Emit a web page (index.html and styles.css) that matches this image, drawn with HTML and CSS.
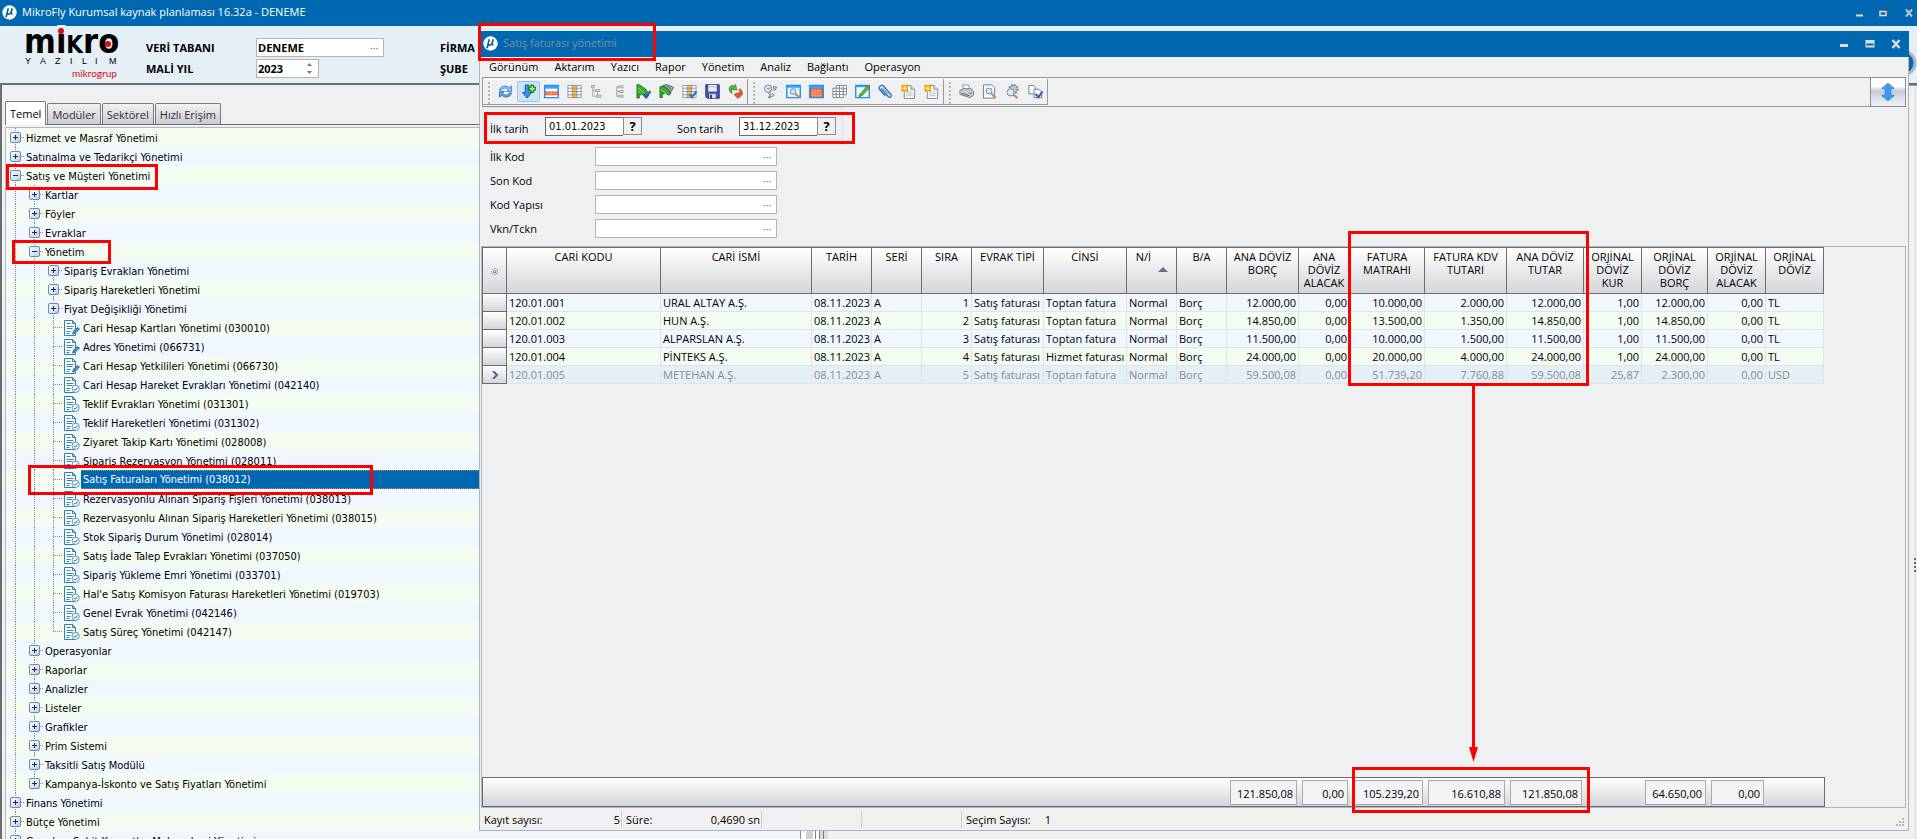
FILE: index.html
```
<!DOCTYPE html>
<html lang="tr">
<head>
    <meta charset="UTF-8">
    <meta name="viewport" content="width=device-width, initial-scale=1.0">
    <title>MikroFly Kurumsal kaynak planlaması</title>
    <link rel="stylesheet" href="styles.css">
</head>
<body>
    <svg class="defs" aria-hidden="true">
        <symbol id="mu" viewBox="0 0 15 15">
            <circle cx="7.5" cy="7.5" r="7.2" fill="#fff"/>
            <path d="M6.3 3.2 L4 12.2 M5.3 7.6 Q5.2 9.4 6.8 9.2 Q8.6 8.8 9.4 6.5 L10.2 3.2 M9.4 6.5 Q8.8 9.2 10.6 8.8" fill="none" stroke="#0a5ea8" stroke-width="1.6"/>
        </symbol>
        <symbol id="doc-clip" viewBox="0 0 16 16">
            <path d="M.5.5h8l3 3v12h-11z" fill="#fff" stroke="#2b7fb3"/>
            <path d="M8.5.5v3h3" fill="none" stroke="#2b7fb3"/>
            <path d="M2.5 3.5h4M2.5 6.5h7M2.5 8.5h6M2.5 11.5h4M2.5 13.5h3" stroke="#3d86b3"/>
            <path d="M8 14.5l1-3.500 4.500-4 2.500 2-4.500 5z" fill="#2678ab"/>
            <path d="M10 12.500l4-4M11 13.500l4-3.500" stroke="#9fd0ec" stroke-width=".7"/>
        </symbol>
        <symbol id="doc-check" viewBox="0 0 16 16">
            <path d="M.5.5h8l3 3v12h-11z" fill="#fff" stroke="#2b7fb3"/>
            <path d="M8.5.5v3h3" fill="none" stroke="#2b7fb3"/>
            <path d="M2.5 3.5h4M2.5 6.5h7M2.5 8.5h6M2.5 11.5h4M2.5 13.5h3" stroke="#3d86b3"/>
            <circle cx="11.7" cy="11.8" r="3.6" fill="#fff" stroke="#4b9acb"/>
            <path d="M10 11.8l1.300 1.400 2.300-2.700" fill="none" stroke="#17608f"/>
        </symbol>
        <symbol id="page-new" viewBox="0 0 16 16">
            <path d="M3.5 1.5h7l4 4v10h-11z" fill="#f6f8fc" stroke="#7d8899"/>
            <path d="M10.5 1.5v4h4" fill="#dfe5ee" stroke="#7d8899"/>
            <path d="M5.5 8.5h7M5.5 10.5h7M5.5 12.5h7" stroke="#b9c4d6"/>
            <path d="M.5 1h7v7h-7z" fill="#f7a21b"/>
            <circle cx="4" cy="4.5" r="2" fill="#ffef5e"/>
            <path d="M1 1.5l1 1M7 1.5l-1 1M1 7.5l1-1M7 7.5l-1-1" stroke="#e4572e"/>
        </symbol>
    </svg>

    <header class="titlebar">
        <svg class="logo-mu"><use href="#mu"/></svg>
        <span class="title-text">MikroFly Kurumsal kaynak planlaması 16.32a - DENEME</span>
        <div class="win-buttons">
            <button aria-label="Küçült"><svg viewBox="0 0 10 10"><path d="M2 6h7" stroke="#555"/><path d="M2 7.5h7" stroke="#dcdcdc" stroke-width="2"/></svg></button>
            <button aria-label="Geri yükle"><svg viewBox="0 0 10 10"><path d="M3 2.5V1h6v5H8" fill="none" stroke="#555"/><path d="M1 3.5h6v4H1z" fill="none" stroke="#dcdcdc" stroke-width="1.5"/></svg></button>
            <button aria-label="Kapat"><svg viewBox="0 0 10 10"><path d="M2 1.5l6 7M8 1.5l-6 7" stroke="#c4c4c8" stroke-width="2"/></svg></button>
        </div>
    </header>

    <section class="company">
        <svg class="brand" viewBox="0 0 100 52" role="img" aria-label="mikro yazılım">
            <text x="0" y="23" class="brand-name">mi<tspan class="small-cap">k</tspan>ro</text>
            <rect x="33" y="-5" width="9" height="8" fill="#e4eff6"/>
            <circle cx="37" cy="1" r="3" fill="#e30613"/>
            <circle cx="84" cy="14" r="3" fill="#e30613"/>
            <text x="1 16 31 46 58 71 85" y="34" class="brand-sub">YAZILIM</text>
            <text x="48" y="47" class="brand-group">mikrogrup</text>
        </svg>
        <div class="company-fields">
            <label for="db">VERİ TABANI</label>
            <div class="field db-field"><input id="db" type="text" value="DENEME"><button aria-label="Seç">···</button></div>
            <label for="year">MALİ YIL</label>
            <div class="field year-field"><input id="year" type="text" value="2023"><svg viewBox="0 0 5 11"><path d="M0 3l2.500-3L5 3zM0 8l2.500 3L5 8z" fill="#777"/></svg></div>
        </div>
        <div class="company-names">
            <span>FİRMA</span>
            <span>ŞUBE</span>
        </div>
        <svg class="round-badge" viewBox="0 0 28 28"><circle cx="14" cy="14" r="12" fill="#0067b1" stroke="#b4b4b8" stroke-width="3"/></svg>
    </section>

    <main class="workspace">
        <aside class="sidebar">
            <nav class="tabs">
                <button class="tab active">Temel</button>
                <button class="tab">Modüler</button>
                <button class="tab">Sektörel</button>
                <button class="tab">Hızlı Erişim</button>
            </nav>
            <ul class="tree">
                <li><i class="g node"><button class="toggle"></button></i><span>Hizmet ve Masraf Yönetimi</span></li>
                <li><i class="g node"><button class="toggle"></button></i><span>Satınalma ve Tedarikçi Yönetimi</span></li>
                <li><i class="g node"><button class="toggle open"></button></i><span>Satış ve Müşteri Yönetimi</span></li>
                <li><i class="g"></i><i class="g node"><button class="toggle"></button></i><span>Kartlar</span></li>
                <li><i class="g"></i><i class="g node"><button class="toggle"></button></i><span>Föyler</span></li>
                <li><i class="g"></i><i class="g node"><button class="toggle"></button></i><span>Evraklar</span></li>
                <li><i class="g"></i><i class="g node"><button class="toggle open"></button></i><span>Yönetim</span></li>
                <li><i class="g"></i><i class="g"></i><i class="g node"><button class="toggle"></button></i><span>Sipariş Evrakları Yönetimi</span></li>
                <li><i class="g"></i><i class="g"></i><i class="g node"><button class="toggle"></button></i><span>Sipariş Hareketleri Yönetimi</span></li>
                <li><i class="g"></i><i class="g"></i><i class="g node"><button class="toggle"></button></i><span>Fiyat Değişikliği Yönetimi</span></li>
                <li><i class="g"></i><i class="g"></i><i class="g tee"></i><svg><use href="#doc-clip"/></svg><span>Cari Hesap Kartları Yönetimi (030010)</span></li>
                <li><i class="g"></i><i class="g"></i><i class="g tee"></i><svg><use href="#doc-clip"/></svg><span>Adres Yönetimi (066731)</span></li>
                <li><i class="g"></i><i class="g"></i><i class="g tee"></i><svg><use href="#doc-clip"/></svg><span>Cari Hesap Yetkilileri Yönetimi (066730)</span></li>
                <li><i class="g"></i><i class="g"></i><i class="g tee"></i><svg><use href="#doc-check"/></svg><span>Cari Hesap Hareket Evrakları Yönetimi (042140)</span></li>
                <li><i class="g"></i><i class="g"></i><i class="g tee"></i><svg><use href="#doc-check"/></svg><span>Teklif Evrakları Yönetimi (031301)</span></li>
                <li><i class="g"></i><i class="g"></i><i class="g tee"></i><svg><use href="#doc-check"/></svg><span>Teklif Hareketleri Yönetimi (031302)</span></li>
                <li><i class="g"></i><i class="g"></i><i class="g tee"></i><svg><use href="#doc-check"/></svg><span>Ziyaret Takip Kartı Yönetimi (028008)</span></li>
                <li><i class="g"></i><i class="g"></i><i class="g tee"></i><svg><use href="#doc-check"/></svg><span>Sipariş Rezervasyon Yönetimi (028011)</span></li>
                <li class="selected"><i class="g"></i><i class="g"></i><i class="g tee"></i><svg><use href="#doc-check"/></svg><span>Satış Faturaları Yönetimi (038012)</span></li>
                <li><i class="g"></i><i class="g"></i><i class="g tee"></i><svg><use href="#doc-check"/></svg><span>Rezervasyonlu Alınan Sipariş Fişleri Yönetimi (038013)</span></li>
                <li><i class="g"></i><i class="g"></i><i class="g tee"></i><svg><use href="#doc-check"/></svg><span>Rezervasyonlu Alınan Sipariş Hareketleri Yönetimi (038015)</span></li>
                <li><i class="g"></i><i class="g"></i><i class="g tee"></i><svg><use href="#doc-check"/></svg><span>Stok Sipariş Durum Yönetimi (028014)</span></li>
                <li><i class="g"></i><i class="g"></i><i class="g tee"></i><svg><use href="#doc-check"/></svg><span>Satış İade Talep Evrakları Yönetimi (037050)</span></li>
                <li><i class="g"></i><i class="g"></i><i class="g tee"></i><svg><use href="#doc-check"/></svg><span>Sipariş Yükleme Emri Yönetimi (033701)</span></li>
                <li><i class="g"></i><i class="g"></i><i class="g tee"></i><svg><use href="#doc-check"/></svg><span>Hal'e Satış Komisyon Faturası Hareketleri Yönetimi (019703)</span></li>
                <li><i class="g"></i><i class="g"></i><i class="g tee"></i><svg><use href="#doc-check"/></svg><span>Genel Evrak Yönetimi (042146)</span></li>
                <li><i class="g"></i><i class="g"></i><i class="g tee last"></i><svg><use href="#doc-check"/></svg><span>Satış Süreç Yönetimi (042147)</span></li>
                <li><i class="g"></i><i class="g node"><button class="toggle"></button></i><span>Operasyonlar</span></li>
                <li><i class="g"></i><i class="g node"><button class="toggle"></button></i><span>Raporlar</span></li>
                <li><i class="g"></i><i class="g node"><button class="toggle"></button></i><span>Analizler</span></li>
                <li><i class="g"></i><i class="g node"><button class="toggle"></button></i><span>Listeler</span></li>
                <li><i class="g"></i><i class="g node"><button class="toggle"></button></i><span>Grafikler</span></li>
                <li><i class="g"></i><i class="g node"><button class="toggle"></button></i><span>Prim Sistemi</span></li>
                <li><i class="g"></i><i class="g node"><button class="toggle"></button></i><span>Taksitli Satış Modülü</span></li>
                <li><i class="g"></i><i class="g node last"><button class="toggle"></button></i><span>Kampanya-İskonto ve Satış Fiyatları Yönetimi</span></li>
                <li><i class="g node"><button class="toggle"></button></i><span>Finans Yönetimi</span></li>
                <li><i class="g node"><button class="toggle"></button></i><span>Bütçe Yönetimi</span></li>
                <li><i class="g node"><button class="toggle"></button></i><span>Genel ve Sabit Kıymetler Muhasebesi Yönetimi</span></li>
            </ul>
        </aside>
        <div class="splitter"></div>
        <div class="desktop"></div>
        <div class="right-rail"><svg viewBox="0 0 3 16"><path d="M0 0h2v2H0zM0 4h2v2H0zM0 8h2v2H0zM0 12h2v2H0z" fill="#666"/></svg></div>
    </main>

    <section class="window">
        <header class="titlebar window-title">
            <svg class="logo-mu"><use href="#mu"/></svg>
            <span class="title-text">Satış faturası yönetimi</span>
            <div class="win-buttons">
                <button aria-label="Küçült"><svg viewBox="0 0 10 10"><path d="M1 6.5h8" stroke="#dcdcdc" stroke-width="3"/></svg></button>
                <button aria-label="Büyüt"><svg viewBox="0 0 10 10"><path d="M.5 1h9v7.500h-9z" fill="#dcdcdc"/><path d="M1.500 4.500h7v2h-7z" fill="#0067b1"/></svg></button>
                <button aria-label="Kapat"><svg viewBox="0 0 10 10"><path d="M1.500 1l7 8M8.500 1l-7 8" stroke="#dcdcdc" stroke-width="2.500"/></svg></button>
            </div>
        </header>
        <nav class="menu">
            <a href="#">Görünüm</a>
            <a href="#">Aktarım</a>
            <a href="#">Yazıcı</a>
            <a href="#">Rapor</a>
            <a href="#">Yönetim</a>
            <a href="#">Analiz</a>
            <a href="#">Bağlantı</a>
            <a href="#">Operasyon</a>
        </nav>
        <div class="toolbar">
            <div class="tools">
                <button aria-label="Yenile"><svg viewBox="0 0 16 16"><path d="M1.500 6.500C2.500 2 8.500.5 12 4l2.500-2v6H9l2-2C8.500 3.500 5 4 4 6.500z" fill="#8cc6f5" stroke="#2f6fbe" stroke-width=".8"/><path d="M14.500 9.500C13.500 14 7.500 15.500 4 12l-2.500 2V8H7l-2 2c2.500 2.500 6 2 7-.5z" fill="#5fa4e6" stroke="#2f5fa8" stroke-width=".8"/></svg></button>
                <button class="pressed" aria-label="Ekle"><svg viewBox="0 0 16 16"><path d="M4.500 1h4v8h3L6.500 15 1.500 9h3z" fill="#3f90e0" stroke="#1d5aa8"/><path d="M10.500 1h3v2.500H16v3h-2.500V9h-3V6.500H8v-3h2.500z" fill="#3fc028" stroke="#157a10"/><path d="M12 2.500v5M9.500 5h5" stroke="#d8ffd0"/></svg></button>
                <button aria-label="Satır"><svg viewBox="0 0 16 16"><path d="M.8 1.500h14.400v13H.8z" fill="#fff" stroke="#1c8ff0" stroke-width="1.500"/><path d="M1 2h14v3H1z" fill="#36a3ff"/><path d="M1 8h14v4H1z" fill="#f0582a"/><path d="M4.500 8v4M8 8v4M11.500 8v4M1 10h14" stroke="#ffb090" stroke-width=".7"/></svg></button>
                <button aria-label="Sütun"><svg viewBox="0 0 16 16"><path d="M1 1.500h14v13H1z" fill="#fff"/><path d="M5.500 1.500h5v13h-5z" fill="#ffb733"/><path d="M1 1.500h14v13H1zM5.500 1.500v13M10.500 1.500v13M1 4.500h14M1 8h14M1 11.500h14" fill="none" stroke="#848a9e" stroke-width=".9"/></svg></button>
                <button aria-label="Ağaç"><svg viewBox="0 0 16 16"><path d="M1.500 1.500h3v2h-3zM6 6h4v2H6zM7.500 12h4v2h-4zM3 4v9h4M3 7h3M8 8v4" fill="none" stroke="#aaa" stroke-width="1.200"/></svg></button>
                <button aria-label="Daralt"><svg viewBox="0 0 16 16"><path d="M6.500 2h4v2h-4zM6.500 7h4v2h-4zM6.500 12h4v2h-4zM6 3H4v10h2M4 8h2" fill="none" stroke="#aaa" stroke-width="1.200"/></svg></button>
                <button aria-label="Seç"><svg viewBox="0 0 16 16"><path d="M1 .5l3 .5 7 5 2.500 6-2 3-6-5-.5 2-1.500-2v5H1z" fill="#35b028" stroke="#145f10" stroke-width=".8"/><path d="M2 4l6 5M2 8l3 2" stroke="#7fe070"/><path d="M8 11l2.500 3L15.500 7.500" fill="none" stroke="#2b5fc0" stroke-width="2.500"/></svg></button>
                <button aria-label="Seçimi kaldır"><svg viewBox="0 0 16 16"><path d="M4 1.500l4-1 7.500 3L12 10 7 5z" fill="#a8a8c4" stroke="#4a4a6a" stroke-width=".8"/><path d="M8 1.500l5 4M6 2l6 6" stroke="#5c5c80" stroke-width=".7"/><path d="M1 3l4-.5 6 4 1.500 4-2 1.500-5-3-.5 2-1.500-1.500v5H1z" fill="#35b028" stroke="#145f10" stroke-width=".8"/><path d="M2 6l6 4" stroke="#7fe070"/></svg></button>
                <button aria-label="Sütun seç"><svg viewBox="0 0 16 16"><path d="M1 1.500h14v13H1z" fill="#fff"/><path d="M5.500 1.500h5v13h-5z" fill="#ffb733"/><path d="M1 1.500h14v13H1zM5.500 1.500v13M10.500 1.500v13M1 4.500h14M1 8h14M1 11.500h14" fill="none" stroke="#848a9e" stroke-width=".9"/><path d="M8 11l2.500 3L15.500 8" fill="none" stroke="#2b70d0" stroke-width="2.200"/></svg></button>
                <button aria-label="Kaydet"><svg viewBox="0 0 16 16"><path d="M.8.8h14.400v14.400H2.500L.8 13.500z" fill="#4a55a8" stroke="#2c3478"/><path d="M3.500 1h9v7h-9z" fill="#eef0f8"/><path d="M3.500 3h9" stroke="#b0b6d8"/><path d="M4.500 10.500h7V15h-7z" fill="#d8dcee"/><path d="M5.500 11.500h2V15h-2z" fill="#2c3478"/></svg></button>
                <button aria-label="Dönüştür"><svg viewBox="0 0 16 16"><path d="M3.500 10C-1 5 2 .5 6.500 2L8 .5l1.500 6-6-.5 1.500-1.500C3 4.500 3 7 4.500 9z" fill="#58b838" stroke="#2c7a1a" stroke-width=".7"/><path d="M12.500 5c4 3 4 8-1 9l-1 1.500L6.500 11l6-2-1 2.500c2.500-.5 2-3.500 0-5z" fill="#f0562c" stroke="#a82c10" stroke-width=".7"/></svg></button>
            </div>
            <div class="tools">
                <button aria-label="Süz"><svg viewBox="0 0 16 16"><circle cx="5.500" cy="5" r="4" fill="#dbe8f2" stroke="#7b8796"/><path d="M4 4l1.500 1.500L8 4M11 2.500l4 1-3 4zM9 6l-3 4 3 4 3-2-2-2" fill="#c5ccd6" stroke="#7b8796"/><circle cx="7" cy="14" r="1.500" fill="#8a93a0"/></svg></button>
                <button aria-label="Bul"><svg viewBox="0 0 16 16"><path d="M.8 1.500h14.400v13H.8z" fill="#eaf5ff" stroke="#1c8ff0" stroke-width="1.500"/><path d="M1 2h14v2H1z" fill="#36a3ff"/><circle cx="7.500" cy="8" r="3" fill="#cfe8fa" stroke="#5a86b0"/><path d="M10 10.500l4 4" stroke="#d8843a" stroke-width="2.200"/></svg></button>
                <button aria-label="Tablo"><svg viewBox="0 0 16 16"><path d="M.8 1.500h14.400v13H.8z" fill="#f0582a" stroke="#1c8ff0" stroke-width="1.500"/><path d="M1 2h14v2.500H1z" fill="#36a3ff"/><path d="M4 5v9M6.500 5v9M9 5v9M11.500 5v9M2 7.500h12M2 10h12M2 12.500h12" stroke="#ffb898" stroke-width=".7"/></svg></button>
                <button aria-label="Tablolar"><svg viewBox="0 0 16 16"><path d="M4.500 1.500h11v10h-11zM8 1.500v10M12 1.500v10M12 5h3.500M12 8h3.500" fill="#fff" stroke="#7d8494"/><path d="M1 4.500h11v10H1zM1 8h11M1 11h11M4.500 4.500v10M8 4.500v10" fill="#fff" stroke="#7d8494"/></svg></button>
                <button aria-label="Düzenle"><svg viewBox="0 0 16 16"><path d="M.8 1.500h14.400v13H.8z" fill="#fff" stroke="#1c8ff0" stroke-width="1.500"/><path d="M1 2h14v1.500H1z" fill="#36a3ff"/><path d="M5 11l8-9 2.500 2-8 8.500-3.500 1z" fill="#4fc23a" stroke="#1f7a14" stroke-width=".8"/><path d="M13 2l2.500 2" stroke="#f04a3a" stroke-width="2"/></svg></button>
                <button aria-label="Ekler"><svg viewBox="0 0 16 16"><path d="M3 5l8 8.500c1.500 1.500 4 0 3-2L6.500 3C4.500 0 0 2.500 1.500 5.500l6.500 7" fill="none" stroke="#4b83b8" stroke-width="1.800"/><path d="M5 4.500l6 6.500" stroke="#7fb4e0" stroke-width="1.800"/></svg></button>
                <button aria-label="Yeni"><svg><use href="#page-new"/></svg></button>
                <button aria-label="Yeni evrak"><svg><use href="#page-new"/></svg></button>
            </div>
            <div class="tools">
                <button aria-label="Yazdır"><svg viewBox="0 0 16 16"><path d="M4 1l6 0 2 5H5z" fill="#fff" stroke="#8a8f98"/><path d="M1 7l3-2h9l2.500 3v4l-4 2.500L1 11z" fill="#c6c9ce" stroke="#74787f"/><path d="M3 10l8 2.500" stroke="#555"/><path d="M11 10h3" stroke="#58b838" stroke-width="1.500"/></svg></button>
                <button aria-label="Önizle"><svg viewBox="0 0 16 16"><path d="M1.500 1h9l3 3v11h-12z" fill="#fff" stroke="#667a94"/><circle cx="7.500" cy="7.500" r="3.200" fill="#cfe8fa" stroke="#5a86b0"/><path d="M10 10l4.500 5" stroke="#d8843a" stroke-width="2.200"/></svg></button>
                <button aria-label="Ayarlı önizle"><svg viewBox="0 0 16 16"><circle cx="9" cy="5.500" r="4.500" fill="#c2c4d4" stroke="#80839a" stroke-dasharray="2 1" stroke-width="2"/><circle cx="6" cy="9" r="3.800" fill="#d8ecfa" stroke="#6a86a8"/><path d="M9 11.500l4.500 3.500" stroke="#d8843a" stroke-width="2.200"/></svg></button>
                <button aria-label="Aktar"><svg viewBox="0 0 16 16"><path d="M1 1.500h5l2 2v7H1z" fill="#fff" stroke="#6b7688"/><path d="M6.500 5.500h5l3 3v6h-8z" fill="#fff" stroke="#6b7688"/><path d="M8 10.500l3 3.500 4.500-6" fill="none" stroke="#1f62b8" stroke-width="2.200"/></svg></button>
            </div>
            <button class="expand" aria-label="Genişlet"><svg viewBox="0 0 14 20"><path d="M7 1l6 5v1H10v6h3v1l-6 5-6-5v-1h3V7H1V6z" fill="#3d97ee" stroke="#4a8fd8" stroke-width=".6"/></svg></button>
        </div>

        <form class="filters">
            <div class="dates">
                <label for="first-date">İlk tarih</label>
                <input id="first-date" type="text" value="01.01.2023"><button type="button">?</button>
                <label for="last-date">Son tarih</label>
                <input id="last-date" type="text" value="31.12.2023"><button type="button">?</button>
            </div>
            <div class="codes">
                <label for="first-code">İlk Kod</label>
                <div class="field"><input id="first-code" type="text"><button type="button" aria-label="Seç">···</button></div>
                <label for="last-code">Son Kod</label>
                <div class="field"><input id="last-code" type="text"><button type="button" aria-label="Seç">···</button></div>
                <label for="code-mask">Kod Yapısı</label>
                <div class="field"><input id="code-mask" type="text"><button type="button" aria-label="Seç">···</button></div>
                <label for="tax-no">Vkn/Tckn</label>
                <div class="field"><input id="tax-no" type="text"><button type="button" aria-label="Seç">···</button></div>
            </div>
        </form>

        <div class="grid">
            <table class="invoices">
                <colgroup>
                    <col class="w24"><col class="w154"><col class="w151"><col class="w60"><col class="w50"><col class="w50"><col class="w72"><col class="w83"><col class="w50"><col class="w50"><col class="w72"><col class="w51"><col class="w75"><col class="w82"><col class="w77"><col class="w58"><col class="w66"><col class="w58"><col class="w58">
                </colgroup>
                <thead>
                    <tr>
                        <th class="mark"><svg viewBox="0 0 8 8"><path d="M4 0v8M0 4h8M1 1l6 6M7 1L1 7" stroke="#6b6b95" stroke-dasharray="1 1"/></svg></th>
                        <th>CARİ KODU</th>
                        <th>CARİ İSMİ</th>
                        <th>TARİH</th>
                        <th>SERİ</th>
                        <th>SIRA</th>
                        <th>EVRAK TİPİ</th>
                        <th>CİNSİ</th>
                        <th class="sorted">N/İ</th>
                        <th>B/A</th>
                        <th>ANA DÖVİZ BORÇ</th>
                        <th>ANA DÖVİZ ALACAK</th>
                        <th>FATURA MATRAHI</th>
                        <th>FATURA KDV TUTARI</th>
                        <th>ANA DÖVİZ TUTAR</th>
                        <th>ORJİNAL DÖVİZ KUR</th>
                        <th>ORJİNAL DÖVİZ BORÇ</th>
                        <th>ORJİNAL DÖVİZ ALACAK</th>
                        <th>ORJİNAL DÖVİZ</th>
                    </tr>
                </thead>
                <tbody>
                    <tr><th></th><td>120.01.001</td><td>URAL ALTAY A.Ş.</td><td>08.11.2023</td><td>A</td><td class="num">1</td><td>Satış faturası</td><td>Toptan fatura</td><td>Normal</td><td>Borç</td><td class="num">12.000,00</td><td class="num">0,00</td><td class="num">10.000,00</td><td class="num">2.000,00</td><td class="num">12.000,00</td><td class="num">1,00</td><td class="num">12.000,00</td><td class="num">0,00</td><td>TL</td></tr>
                    <tr><th></th><td>120.01.002</td><td>HUN A.Ş.</td><td>08.11.2023</td><td>A</td><td class="num">2</td><td>Satış faturası</td><td>Toptan fatura</td><td>Normal</td><td>Borç</td><td class="num">14.850,00</td><td class="num">0,00</td><td class="num">13.500,00</td><td class="num">1.350,00</td><td class="num">14.850,00</td><td class="num">1,00</td><td class="num">14.850,00</td><td class="num">0,00</td><td>TL</td></tr>
                    <tr><th></th><td>120.01.003</td><td>ALPARSLAN A.Ş.</td><td>08.11.2023</td><td>A</td><td class="num">3</td><td>Satış faturası</td><td>Toptan fatura</td><td>Normal</td><td>Borç</td><td class="num">11.500,00</td><td class="num">0,00</td><td class="num">10.000,00</td><td class="num">1.500,00</td><td class="num">11.500,00</td><td class="num">1,00</td><td class="num">11.500,00</td><td class="num">0,00</td><td>TL</td></tr>
                    <tr><th></th><td>120.01.004</td><td>PİNTEKS A.Ş.</td><td>08.11.2023</td><td>A</td><td class="num">4</td><td>Satış faturası</td><td>Hizmet faturası</td><td>Normal</td><td>Borç</td><td class="num">24.000,00</td><td class="num">0,00</td><td class="num">20.000,00</td><td class="num">4.000,00</td><td class="num">24.000,00</td><td class="num">1,00</td><td class="num">24.000,00</td><td class="num">0,00</td><td>TL</td></tr>
                    <tr class="current"><th><svg viewBox="0 0 8 8"><path d="M2 0l4 4-4 4" fill="none" stroke="#5f5f8a" stroke-width="2"/></svg></th><td>120.01.005</td><td>METEHAN A.Ş.</td><td>08.11.2023</td><td>A</td><td class="num">5</td><td>Satış faturası</td><td>Toptan fatura</td><td>Normal</td><td>Borç</td><td class="num">59.500,08</td><td class="num">0,00</td><td class="num">51.739,20</td><td class="num">7.760,88</td><td class="num">59.500,08</td><td class="num">25,87</td><td class="num">2.300,00</td><td class="num">0,00</td><td>USD</td></tr>
                </tbody>
            </table>
            <table class="totals">
                <colgroup>
                    <col class="w24"><col class="w154"><col class="w151"><col class="w60"><col class="w50"><col class="w50"><col class="w72"><col class="w83"><col class="w50"><col class="w50"><col class="w72"><col class="w51"><col class="w75"><col class="w82"><col class="w77"><col class="w58"><col class="w66"><col class="w58"><col class="w58">
                </colgroup>
                <tbody>
                    <tr><td colspan="10"></td><td><div>121.850,08</div></td><td><div>0,00</div></td><td><div>105.239,20</div></td><td><div>16.610,88</div></td><td><div>121.850,08</div></td><td></td><td><div>64.650,00</div></td><td><div>0,00</div></td><td></td></tr>
                </tbody>
            </table>
        </div>

        <footer class="status">
            <span class="records">Kayıt sayısı:<b>5</b></span>
            <span class="elapsed">Süre:<b>0,4690 sn</b></span>
            <span class="blank"></span>
            <span class="blank"></span>
            <span class="picked">Seçim Sayısı:<b>1</b></span>
            <svg class="grip" viewBox="0 0 9 9"><path d="M6 0h2v2H6zM6 3h2v2H6zM3 3h2v2H3zM6 6h2v2H6zM3 6h2v2H3zM0 6h2v2H0z" fill="#b8b8b8"/></svg>
        </footer>
    </section>

    <div class="mark-box mark-title"></div>
    <div class="mark-box mark-dates"></div>
    <div class="mark-box mark-module"></div>
    <div class="mark-box mark-branch"></div>
    <div class="mark-box mark-item"></div>
    <div class="mark-box mark-columns"></div>
    <div class="mark-box mark-totals"></div>
    <svg class="mark-arrow" viewBox="0 0 9 376"><path d="M3 0h3v362H3z" fill="#f00"/><path d="M0 361h9L4.500 376z" fill="#f00"/></svg>
</body>
</html>
```

FILE: styles.css
```
* {
    box-sizing: border-box;
}
body {
    margin: 0;
    height: 100vh;
    overflow: hidden;
    position: relative;
    display: flex;
    flex-direction: column;
    background: #eff0f2;
    color: #000;
    font-family: "Open Sans", "Noto Sans", sans-serif;
    font-size: 11px;
}
button, input {
    font: inherit;
    color: inherit;
    margin: 0;
    padding: 0;
    border: none;
    background: none;
}
.defs {
    position: absolute;
    width: 0;
    height: 0;
}

/* title bars */
.titlebar {
    flex: none;
    display: flex;
    align-items: center;
    height: 26px;
    background: #0067b1;
    color: #fff;
}
.titlebar .title-text {
    flex: 1;
    padding-bottom: 3px;
}
.logo-mu {
    width: 15px;
    height: 15px;
    margin: 0 5px 2px 2px;
}
.win-buttons {
    display: flex;
    gap: 15px;
    padding-right: 3px;
}
.win-buttons button {
    width: 10px;
    height: 20px;
}
.win-buttons svg {
    display: block;
    width: 10px;
    height: 10px;
    margin: 4px 0;
}

/* company strip */
.company {
    flex: none;
    position: relative;
    display: flex;
    height: 59px;
    background: #e4eff6;
    border-bottom: 2px solid #6d6e72;
    font-weight: bold;
}
.brand {
    width: 100px;
    height: 52px;
    margin: 4px 22px 0 24px;
    overflow: visible;
}
.brand-name {
    font: bold 34px "DejaVu Sans Condensed", sans-serif;
}
.small-cap {
    font-variant: small-caps;
}
.brand-sub {
    font: 9px "Liberation Sans", sans-serif;
}
.brand-group {
    font: 10px Lato, sans-serif;
    fill: #e30613;
}
.company-fields {
    display: grid;
    grid-template-columns: 110px 128px;
    grid-template-rows: 19px 19px;
    row-gap: 2px;
    align-items: center;
    padding-top: 12px;
}
.field {
    display: flex;
    align-items: center;
    height: 19px;
    background: #fff;
    border: 1px solid #b2b5bd;
}
.field input {
    flex: 1;
    min-width: 0;
    padding-left: 1px;
}
.field button {
    width: 18px;
    color: #777;
    font-weight: normal;
}
.year-field {
    width: 63px;
}
.year-field svg {
    width: 5px;
    height: 11px;
    margin-right: 6px;
}
.company-names {
    display: flex;
    flex-direction: column;
    gap: 2px;
    padding: 12px 0 0 56px;
    line-height: 19px;
}
.round-badge {
    position: absolute;
    right: 0;
    top: 23px;
    width: 28px;
    height: 28px;
}

/* left panel */
.workspace {
    flex: 1;
    min-height: 0;
    display: flex;
}
.sidebar {
    width: 800px;
    display: flex;
    flex-direction: column;
    border-left: 2px solid #6d6e72;
    padding-left: 3px;
}
.tabs {
    flex: none;
    display: flex;
    align-items: flex-end;
    gap: 1px;
    height: 40px;
    border-bottom: 1px solid #6d6e72;
}
.tab {
    height: 21px;
    padding: 0 4px;
    border: 1px solid #7a7b80;
    border-bottom: none;
    border-radius: 2px 2px 0 0;
    background: linear-gradient(#f2f2f4, #c9cbd0);
    color: #333;
}
.tab.active {
    height: 24px;
    margin-bottom: -1px;
    background: #fff;
    color: #000;
}
.tree {
    flex: 1;
    min-height: 0;
    overflow: hidden;
    list-style: none;
    margin: 2px 0 0;
    padding: 0;
    border: solid #b6b8c0;
    border-width: 1px 0 0 1px;
    font-family: "DejaVu Sans Condensed", "DejaVu Sans", sans-serif;
}
.tree li {
    display: flex;
    align-items: center;
    height: 19px;
    background: #f4fcf2;
    white-space: nowrap;
}
.tree li:nth-child(even) {
    background: #f0f7ff;
}
.tree li > span {
    padding: 2px 0 0 1px;
}
.tree li > svg {
    width: 16px;
    height: 16px;
    margin: 0 2px 0 1px;
}
.g {
    flex: none;
    width: 19px;
    height: 19px;
    background: repeating-linear-gradient(#8a8a8a 0 1px, transparent 1px 2px) 9px 0 / 1px 19px no-repeat;
}
.g.node, .g.tee {
    background: repeating-linear-gradient(#8a8a8a 0 1px, transparent 1px 2px) 9px 0 / 1px 19px no-repeat,
        repeating-linear-gradient(90deg, #8a8a8a 0 1px, transparent 1px 2px) 9px 9px / 10px 1px no-repeat;
}
.g.last {
    background-size: 1px 10px, 10px 1px;
}
.toggle {
    display: block;
    width: 11px;
    height: 11px;
    margin: 4px;
    border: 1px solid #7088a8;
    border-radius: 2px;
    background: linear-gradient(#1c2c58, #1c2c58) 2px 4px / 5px 1px no-repeat,
        linear-gradient(#1c2c58, #1c2c58) 4px 2px / 1px 5px no-repeat,
        linear-gradient(135deg, #fff, #b9cfea);
}
.toggle.open {
    background: linear-gradient(#1c2c58, #1c2c58) 2px 4px / 5px 1px no-repeat,
        linear-gradient(135deg, #fff, #b9cfea);
}
.tree .selected > svg {
    margin-right: 1px;
}
.tree .selected > span {
    flex: 1;
    padding: 0 0 0 2px;
    line-height: 17px;
    background: #0067b1;
    color: #fff;
    border: dotted #d08a48;
    border-width: 1px 0;
}
.splitter {
    width: 28px;
    border-left: 1px solid #8a8a90;
    background: linear-gradient(90deg, #fff 0 5px, #d0d0d4 5px 12px, #fff 12px 14px, #777 14px 15px, #fff 15px 18px, #777 18px 19px, #ddd 19px 22px, #777 22px 23px, #ddd 23px);
}
.desktop {
    flex: 1;
}
.right-rail {
    width: 8px;
    display: flex;
    align-items: center;
    padding: 206px 0 0 5px;
    border-top: 1px solid #9a9a9e;
    background: linear-gradient(90deg, #eff0f2 0 6px, #dcdde0 6px 7px, #eff0f2 7px);
}
.right-rail svg {
    width: 3px;
    height: 16px;
}

/* invoice window */
.window {
    position: absolute;
    left: 479px;
    right: 8px;
    top: 31px;
    bottom: 8px;
    display: flex;
    flex-direction: column;
    background: #eff0f2;
    border: solid #b2b5c0;
    border-width: 0 1px 1px;
    padding: 0 0 2px 1px;
}
.window-title {
    margin-right: -1px;
    color: #7f8d9c;
}
.window-title .win-buttons {
    gap: 16px;
    padding-right: 8px;
}
.menu {
    flex: none;
    display: flex;
    gap: 16px;
    height: 20px;
    padding-left: 8px;
    line-height: 19px;
    background: #f0f0f0;
}
.menu a {
    color: #000;
    text-decoration: none;
}
.toolbar {
    flex: none;
    display: flex;
    height: 30px;
    margin: 0 2px 0 1px;
    border: 1px solid #9a9a9a;
}
.tools {
    display: flex;
    align-items: center;
    height: 26px;
    margin-top: 1px;
    padding-left: 11px;
    border-right: 1px solid #9a9a9a;
    border-bottom: 1px solid #9a9a9a;
    box-shadow: inset 0 1px #fff;
    background: radial-gradient(circle at 1px 1px, #b8b8b8 1px, transparent 1px) 5px 3px / 3px 4px repeat-y;
}
.tools button {
    width: 23px;
    height: 21px;
    padding: 0 3px;
    border: 1px solid transparent;
    border-radius: 2px;
}
.tools .pressed {
    background: #cce4f9;
    border-color: #98c8f0;
}
.tools svg {
    display: block;
    width: 15px;
    height: 15px;
}
.expand {
    width: 36px;
    height: 30px;
    margin: -1px -1px 0 auto;
    border: 1px solid #8a8f99;
    background: linear-gradient(#fff 0 30%, #c4ced9 45%, #eef1f5);
}
.expand svg {
    display: block;
    width: 14px;
    height: 20px;
    margin: auto;
}
.filters {
    flex: none;
    height: 139px;
    padding-left: 1px;
}
.dates {
    display: flex;
    width: 361px;
    height: 33px;
    padding: 9px 0 0 7px;
    border: 1px solid #e0e1e3;
}
.dates label {
    width: 55px;
    padding-top: 4px;
}
.dates label + input ~ label {
    width: 62px;
    margin-left: 35px;
}
.dates input {
    width: 78px;
    height: 19px;
    padding: 0 3px 1px;
    border: 1px solid #6a6a6a;
    border-right: none;
    background: #fff;
    font-family: "DejaVu Sans Condensed", sans-serif;
}
.dates button {
    width: 19px;
    height: 18px;
    border: 1px solid #8c8c8c;
    background: #f0f0f0;
    font-size: 13px;
    font-weight: bold;
    line-height: 14px;
}
.codes {
    display: grid;
    grid-template-columns: 105px 182px;
    grid-auto-rows: 19px;
    row-gap: 5px;
    align-items: center;
    padding: 7px 0 0 8px;
}

/* grid */
.grid {
    flex: 1;
    min-height: 0;
    display: flex;
    flex-direction: column;
    justify-content: space-between;
    margin-right: 2px;
    border: 1px solid #b2b5bd;
    overflow: hidden;
}
.grid table {
    width: 1342px;
    table-layout: fixed;
    border-collapse: separate;
    border-spacing: 0;
    border-left: 1px solid #6d6e72;
}
.w24 { width: 24px; }
.w50 { width: 50px; }
.w51 { width: 51px; }
.w58 { width: 58px; }
.w60 { width: 60px; }
.w66 { width: 66px; }
.w72 { width: 72px; }
.w75 { width: 75px; }
.w77 { width: 77px; }
.w82 { width: 82px; }
.w83 { width: 83px; }
.w151 { width: 151px; }
.w154 { width: 154px; }
.invoices th {
    padding: 0;
    border-right: 1px solid #6d6e72;
    border-bottom: 1px solid #6d6e72;
    background: linear-gradient(#fff, #d4d6da);
    font-weight: normal;
}
.invoices thead th {
    height: 47px;
    padding: 2px 2px 0;
    border-top: 1px solid #6d6e72;
    line-height: 13px;
    vertical-align: top;
}
.invoices th svg {
    display: block;
    width: 8px;
    height: 8px;
    margin: auto;
}
.invoices thead .mark {
    vertical-align: middle;
}
.invoices thead .sorted {
    position: relative;
    padding-right: 18px;
}
.sorted::after {
    content: "";
    position: absolute;
    right: 8px;
    top: 19px;
    border: 5px solid transparent;
    border-top: none;
    border-bottom-color: #6b6b95;
}
.invoices td {
    height: 18px;
    padding: 0 2px;
    border-right: 1px solid #e0e3e8;
    border-bottom: 1px solid #e0e3e8;
    line-height: 17px;
    white-space: nowrap;
    overflow: hidden;
    background: #f0f7ff;
}
.invoices tr:nth-child(even) td {
    background: #f4fcf2;
}
.invoices .current td {
    background: #e4eff6;
    color: #8c8c8c;
}
.num {
    text-align: right;
}
.grid .totals {
    border: 1px solid #6d6e72;
    background: linear-gradient(#fff, #d2d5da);
}
.totals td {
    height: 28px;
    padding: 0 2px 0 3px;
}
.totals div {
    height: 25px;
    padding-right: 3px;
    border: 1px solid #a8aab0;
    background: #f2f3f5;
    line-height: 26px;
    text-align: right;
}
.status {
    flex: none;
    display: flex;
    align-items: center;
    height: 20px;
    padding-top: 2px;
    background: #f0f0f0;
    position: relative;
}
.status span {
    display: flex;
    justify-content: space-between;
    height: 17px;
    padding: 0 1px 0 4px;
    line-height: 17px;
    border-right: 1px solid #d0d0d0;
}
.status b {
    font-weight: normal;
}
.status .records {
    width: 141px;
    padding-left: 3px;
}
.status .elapsed { width: 140px; }
.status .blank { width: 100px; }
.status .picked {
    width: 90px;
    border: none;
}
.grip {
    position: absolute;
    right: 3px;
    bottom: 1px;
    width: 9px;
    height: 9px;
}

/* red marks over the screen */
.mark-box {
    position: absolute;
    border: 3px solid #f00;
}
.mark-title { left: 478px; top: 23px; width: 178px; height: 38px; }
.mark-dates { left: 484px; top: 112px; width: 371px; height: 32px; }
.mark-module { left: 6px; top: 164px; width: 152px; height: 26px; }
.mark-branch { left: 12px; top: 240px; width: 99px; height: 24px; }
.mark-item { left: 28px; top: 465px; width: 345px; height: 30px; }
.mark-columns { left: 1348px; top: 231px; width: 241px; height: 155px; }
.mark-totals { left: 1352px; bottom: 26px; width: 238px; height: 46px; }
.mark-arrow {
    position: absolute;
    left: 1469px;
    top: 386px;
    width: 9px;
    height: 376px;
}
```
